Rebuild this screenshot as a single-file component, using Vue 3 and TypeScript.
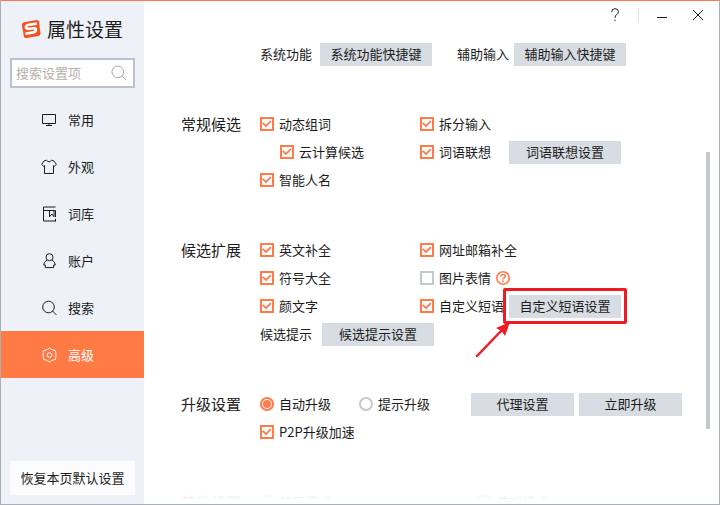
<script setup lang="ts">
import { ref } from 'vue'

interface NavItem {
  id: string
  label: string
}

const navItems: NavItem[] = [
  { id: 'common', label: '常用' },
  { id: 'skin', label: '外观' },
  { id: 'dict', label: '词库' },
  { id: 'account', label: '账户' },
  { id: 'search', label: '搜索' },
  { id: 'advanced', label: '高级' },
]

const active = ref('advanced')
const keyword = ref('')
const upgradeMode = ref('auto')
const options = ref({
  dynamicWords: true,
  splitInput: true,
  cloud: true,
  association: true,
  smartNames: true,
  english: true,
  urlMail: true,
  symbols: true,
  imageEmoji: false,
  emoticon: true,
  phrases: true,
  p2p: true,
  extraA: false,
  extraB: false,
})
</script>

<template>
  <div class="window">
    <aside class="sidebar">
      <h1 class="brand">
        <svg class="logo" viewBox="0 0 20 20" aria-hidden="true">
          <path d="M3 3.2 15.5 1Q17.6.8 18 2.8l1.400 11.500q.2 2.200-1.800 2.700L5.600 19.100q-2.100.3-2.700-1.700L.9 6.200Q.6 3.700 3 3.200Z" fill="#f4511e" />
          <path d="M15.800 4.600 8 5.700Q4.700 6.300 4.900 8.200 5.100 10 8.200 9.700l4-.5q2.700-.2 2.800 1.600.1 2-3 2.600l-7.600 1.300" fill="none" stroke="#fff" stroke-width="2.600" />
        </svg>
        属性设置
      </h1>
      <label class="search">
        <input v-model="keyword" type="text" placeholder="搜索设置项" aria-label="搜索设置项" />
        <svg viewBox="0 0 16 16" aria-hidden="true">
          <circle cx="6.800" cy="6.800" r="5.800" />
          <path d="m11 11 4.200 4" />
        </svg>
      </label>
      <nav class="nav">
        <a
          v-for="item in navItems"
          :key="item.id"
          href="#"
          :class="['nav-item', { active: active === item.id }]"
          @click.prevent="active = item.id"
        >
          <svg viewBox="0 0 16 16" aria-hidden="true">
            <template v-if="item.id === 'common'">
              <path d="M1.500 2.500h13v9h-13zM8 11.500v2M5 13.500h6" />
            </template>
            <template v-else-if="item.id === 'skin'">
              <path d="M5.400 1.200Q8 4.400 10.600 1.200L13 2l2.400 3.400-2 1.800-.9-.7v8h-9v-8l-.9.7-2-1.800L3 2z" />
            </template>
            <template v-else-if="item.id === 'dict'">
              <path d="M14.500 1H2.500v14h12M2.500 4.500h12V11M8.500 4.500v6.300l2.500-2.800 2 2.800V4.500M14.500 12.800V15.500" />
            </template>
            <template v-else-if="item.id === 'account'">
              <circle cx="8.500" cy="4.200" r="3.500" />
              <path d="M6 7Q2.800 8.800 2.700 12h1.600v2.600h8.400V12h1.600Q14.200 8.800 11 7" />
            </template>
            <template v-else-if="item.id === 'search'">
              <circle cx="7.500" cy="7" r="5.800" />
              <path d="m11.500 11 4 4" />
            </template>
            <template v-else>
              <path d="M8.500.9 10.600 2.500l3.900 1.200.5 4.300-.5 4.300-3.900 1.200-2.100 1.600-2.100-1.600-3.900-1.200L2 8l.5-4.300 3.900-1.200z" />
              <circle cx="8.500" cy="8" r="2.300" />
            </template>
          </svg>
          <span>{{ item.label }}</span>
        </a>
      </nav>
      <button type="button" class="restore">恢复本页默认设置</button>
    </aside>

    <main class="main">
      <header class="titlebar">
        <button type="button" class="win-btn" aria-label="帮助">
          <svg viewBox="0 0 14 14"><path d="M3.700 4Q3.600.7 7 .7t3.400 3q0 1.700-1.800 3Q7 7.800 7 9.800M7 11.700v1.500" /></svg>
        </button>
        <span class="divider"></span>
        <button type="button" class="win-btn" aria-label="最小化">
          <svg viewBox="0 0 14 14"><path d="M2 9.500h10" /></svg>
        </button>
        <button type="button" class="win-btn" aria-label="关闭">
          <svg viewBox="0 0 14 14"><path d="m2 2 10 10M12 2 2 12" /></svg>
        </button>
      </header>

      <div class="content">
        <section class="group">
          <div></div>
          <div class="rows">
            <div class="row shortcuts">
              <div class="pair">
                <span>系统功能</span>
                <button type="button" class="btn">系统功能快捷键</button>
              </div>
              <div class="pair tight">
                <span>辅助输入</span>
                <button type="button" class="btn">辅助输入快捷键</button>
              </div>
            </div>
          </div>
        </section>

        <section class="group">
          <h2>常规候选</h2>
          <div class="rows">
            <div class="row cols">
              <label class="opt"><input v-model="options.dynamicWords" type="checkbox" />动态组词</label>
              <label class="opt"><input v-model="options.splitInput" type="checkbox" />拆分输入</label>
            </div>
            <div class="row cols">
              <label class="opt nested"><input v-model="options.cloud" type="checkbox" />云计算候选</label>
              <label class="opt"><input v-model="options.association" type="checkbox" />词语联想</label>
              <button type="button" class="btn">词语联想设置</button>
            </div>
            <div class="row cols">
              <label class="opt"><input v-model="options.smartNames" type="checkbox" />智能人名</label>
            </div>
          </div>
        </section>

        <section class="group">
          <h2>候选扩展</h2>
          <div class="rows">
            <div class="row cols">
              <label class="opt"><input v-model="options.english" type="checkbox" />英文补全</label>
              <label class="opt"><input v-model="options.urlMail" type="checkbox" />网址邮箱补全</label>
            </div>
            <div class="row cols">
              <label class="opt"><input v-model="options.symbols" type="checkbox" />符号大全</label>
              <div class="opt">
                <label class="opt"><input v-model="options.imageEmoji" type="checkbox" />图片表情</label>
                <button type="button" class="hint" aria-label="说明">
                  <svg viewBox="0 0 14 14">
                    <circle cx="7" cy="7" r="6.200" />
                    <path d="M4.800 5.500Q4.900 3.500 7 3.500t2.200 1.900Q9.200 6.400 8 7T7 8.500M7 9.600v1.500" />
                  </svg>
                </button>
              </div>
            </div>
            <div class="row cols">
              <label class="opt"><input v-model="options.emoticon" type="checkbox" />颜文字</label>
              <label class="opt"><input v-model="options.phrases" type="checkbox" />自定义短语</label>
              <div class="marked">
                <button type="button" class="btn">自定义短语设置</button>
                <span class="mark"></span>
                <svg class="arrow" viewBox="0 0 40 40" aria-hidden="true">
                  <path d="M4 37 29 11" fill="none" stroke="#ed1c24" stroke-width="2.500" stroke-linecap="round" />
                  <path d="M37 3 32 17 28.500 12 23 9z" fill="#ed1c24" />
                </svg>
              </div>
            </div>
            <div class="row tips">
              <span>候选提示</span>
              <button type="button" class="btn">候选提示设置</button>
            </div>
          </div>
        </section>

        <section class="group">
          <h2>升级设置</h2>
          <div class="rows">
            <div class="row upgrade">
              <label class="opt"><input v-model="upgradeMode" type="radio" name="upgrade" value="auto" />自动升级</label>
              <label class="opt"><input v-model="upgradeMode" type="radio" name="upgrade" value="notify" />提示升级</label>
              <div class="actions">
                <button type="button" class="btn">代理设置</button>
                <button type="button" class="btn">立即升级</button>
              </div>
            </div>
            <div class="row cols">
              <label class="opt"><input v-model="options.p2p" type="checkbox" />P2P升级加速</label>
            </div>
          </div>
        </section>

        <section class="group faded">
          <h2>其他设置</h2>
          <div class="rows">
            <div class="row extras">
              <label class="opt"><input v-model="options.extraA" type="checkbox" />兼容模式</label>
              <label class="opt"><input v-model="options.extraB" type="checkbox" />游戏模式</label>
            </div>
          </div>
        </section>
      </div>
      <div class="scrollbar"></div>
    </main>
  </div>
</template>

<style>
body {
  margin: 0;
}
</style>

<style scoped>
.window {
  box-sizing: border-box;
  display: grid;
  grid-template-columns: 143px 1fr;
  height: 100vh;
  border: 1px solid #a9afb8;
  border-top-color: #ff7b4a;
  background: #fff;
  color: #1c1c1c;
  font: 13px/20px "Noto Sans CJK SC", sans-serif;
  overflow: hidden;
}
button,
input {
  font: inherit;
  color: inherit;
}
button {
  padding: 0;
  border: 0;
  background: none;
  white-space: nowrap;
}
svg {
  fill: none;
  stroke: currentColor;
}
.sidebar {
  display: flex;
  flex-direction: column;
  background: #eef1f7;
}
.brand {
  display: flex;
  align-items: center;
  gap: 6px;
  margin: 13px 0 14px 20px;
  font-size: 19px;
  line-height: 30px;
  font-weight: 400;
}
.logo {
  width: 20px;
  height: 20px;
  stroke: none;
}
.search {
  display: flex;
  align-items: center;
  height: 26px;
  margin: 0 9px 8px;
  padding: 0 6px 0 4px;
  border: 2px solid #bcc2cc;
  background: #fff;
}
.search input {
  flex: 1;
  min-width: 0;
  padding: 0;
  border: 0;
  outline: 0;
  background: none;
}
.search input::placeholder {
  color: #b5afac;
}
.search svg {
  width: 16px;
  height: 16px;
  color: #aaa;
}
.nav-item {
  display: flex;
  align-items: center;
  gap: 11px;
  height: 47px;
  padding-left: 40px;
  color: inherit;
  text-decoration: none;
}
.nav-item svg {
  width: 16px;
  height: 16px;
}
.nav-item.active {
  background: #ff7a45;
  color: #fff;
}
.restore {
  height: 34px;
  margin: auto 9px 9px;
  background: #fcfcfd;
}
.main {
  position: relative;
  display: flex;
  flex-direction: column;
  min-width: 0;
  min-height: 0;
}
.titlebar {
  display: flex;
  flex: none;
  align-items: center;
  justify-content: flex-end;
  height: 28px;
  padding-right: 14px;
}
.win-btn {
  display: flex;
  width: 14px;
  height: 14px;
}
.win-btn + .win-btn {
  margin-left: 22px;
}
.win-btn svg {
  width: 14px;
  height: 14px;
}
.divider {
  width: 1px;
  height: 14px;
  margin: 0 16px;
  background: #dcdfe6;
}
.content {
  display: flex;
  flex: 1;
  flex-direction: column;
  gap: 42px;
  min-height: 0;
  margin-bottom: 5px;
  padding: 11px 0 0 37px;
  overflow: hidden;
}
.group {
  display: grid;
  flex: none;
  grid-template-columns: 79px 1fr;
}
h2 {
  margin: 0;
  font-size: 15px;
  line-height: 28px;
  font-weight: 400;
}
.row {
  display: flex;
  align-items: center;
  height: 28px;
  white-space: nowrap;
}
.cols {
  display: grid;
  grid-template-columns: 160px 89px 1fr;
}
.shortcuts {
  gap: 25px;
}
.pair {
  display: flex;
  align-items: center;
  gap: 8px;
}
.pair.tight {
  gap: 5px;
}
.tips {
  gap: 10px;
}
.upgrade .opt {
  width: 99px;
}
.extras {
  display: grid;
  grid-template-columns: 217px 1fr;
}
.actions {
  display: flex;
  gap: 5px;
  margin-left: 13px;
}
.actions .btn {
  width: 103px;
}
.opt {
  display: flex;
  align-items: center;
  gap: 5px;
}
.nested {
  padding-left: 20px;
}
.btn {
  display: block;
  width: 112px;
  height: 23px;
  background: #d8dce3;
}
.opt input {
  box-sizing: border-box;
  flex: none;
  appearance: none;
  width: 14px;
  height: 14px;
  margin: 0;
  border: 2px solid #c3c8d1;
  background: #fff;
}
.opt input:checked {
  border-color: #ff7b4a;
}
.opt input[type="checkbox"]:checked::before {
  content: "";
  display: block;
  width: 10px;
  height: 10px;
  background: #ff7b4a;
  clip-path: polygon(0 45%, 13% 32%, 40% 57%, 82% 15%, 95% 28%, 40% 83%);
}
.opt input[type="radio"] {
  border-radius: 50%;
}
.opt input[type="radio"]:checked::before {
  content: "";
  display: block;
  width: 8px;
  height: 8px;
  margin: 1px;
  border-radius: 50%;
  background: #ff7b4a;
}
.hint {
  display: flex;
  color: #ff7b4a;
}
.hint svg {
  width: 14px;
  height: 14px;
  stroke-width: 1.6;
}
.marked {
  position: relative;
  width: 112px;
}
.mark {
  position: absolute;
  inset: -7px -6px -6px -6px;
  border: 3px solid #ed1c24;
  border-radius: 2px;
  pointer-events: none;
}
.arrow {
  position: absolute;
  top: 24px;
  left: -36px;
  width: 40px;
  height: 40px;
  stroke: none;
  pointer-events: none;
}
.faded {
  opacity: 0.06;
}
.scrollbar {
  position: absolute;
  top: 30%;
  right: 9px;
  width: 4px;
  height: 55%;
  background: #c5c8d1;
}
</style>
